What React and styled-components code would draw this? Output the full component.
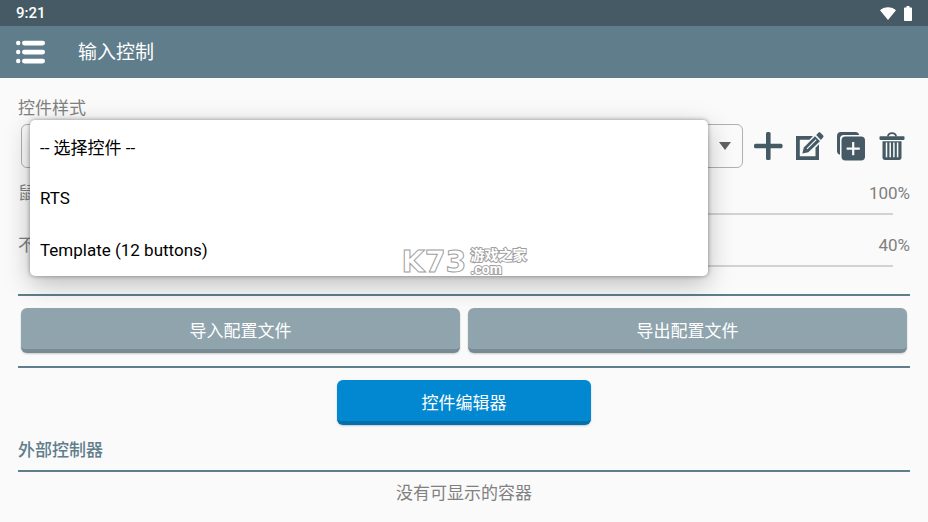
import React, { useState } from 'react';
import styled, { createGlobalStyle } from 'styled-components';

const profiles = ['-- 选择控件 --', 'RTS', 'Template (12 buttons)'];

const App = () => {
  const [profile, setProfile] = useState(profiles[0]);
  const [cursorSpeed, setCursorSpeed] = useState(100);
  const [opacity, setOpacity] = useState(40);

  return (
    <Page>
      <GlobalStyle />
      <StatusBar>
        <Clock>9:21</Clock>
        <StatusIcons>
          <WifiIcon />
          <BatteryIcon />
        </StatusIcons>
      </StatusBar>

      <Toolbar>
        <IconButton aria-label="菜单">
          <MenuIcon />
        </IconButton>
        <Title>输入控制</Title>
      </Toolbar>

      <Content>
        <FieldLabel htmlFor="profile">控件样式</FieldLabel>
        <ProfileRow>
          <SelectWrap>
            <Select id="profile" value={profile} onChange={(e) => setProfile(e.target.value)}>
              {profiles.map((name) => (
                <option key={name}>{name}</option>
              ))}
            </Select>
            <Arrow viewBox="0 0 12 10" aria-hidden="true">
              <path d="M0 1h12L6 9z" />
            </Arrow>
            <Popup>
              {profiles.map((name) => (
                <li key={name}>
                  <PopupItem onClick={() => setProfile(name)}>{name}</PopupItem>
                </li>
              ))}
            </Popup>
          </SelectWrap>
          <IconButton aria-label="添加"><AddIcon /></IconButton>
          <IconButton aria-label="编辑"><EditIcon /></IconButton>
          <IconButton aria-label="复制"><DuplicateIcon /></IconButton>
          <IconButton aria-label="删除"><TrashIcon /></IconButton>
        </ProfileRow>

        <Sliders>
          <div>
            <SliderHeader>
              <label htmlFor="speed">鼠标速度</label>
              <output htmlFor="speed">{cursorSpeed}%</output>
            </SliderHeader>
            <Range
              id="speed"
              min="0"
              max="200"
              value={cursorSpeed}
              onChange={(e) => setCursorSpeed(e.target.value)}
            />
          </div>
          <div>
            <SliderHeader>
              <label htmlFor="opacity">不透明度</label>
              <output htmlFor="opacity">{opacity}%</output>
            </SliderHeader>
            <Range
              id="opacity"
              min="0"
              max="100"
              value={opacity}
              onChange={(e) => setOpacity(e.target.value)}
            />
          </div>
        </Sliders>

        <Divider />
        <ButtonRow>
          <Button>导入配置文件</Button>
          <Button>导出配置文件</Button>
        </ButtonRow>
        <Divider />
        <EditorRow>
          <Button $primary>控件编辑器</Button>
        </EditorRow>

        <SectionTitle>外部控制器</SectionTitle>
        <Divider />
        <EmptyText>没有可显示的容器</EmptyText>
      </Content>

      <Watermark>
        <WatermarkLogo>K73</WatermarkLogo>
        <WatermarkName>
          <span>游戏之家</span>
          <span>.com</span>
        </WatermarkName>
      </Watermark>
    </Page>
  );
};

// Icons
const WifiIcon = () => (
  <svg width="16" height="13" viewBox="0 0 16 13" fill="#fff" aria-hidden="true">
    <path d="M8 13 0 3.2C2.200 1.300 5 .3 8 .3s5.800 1 8 2.900z" />
  </svg>
);

const BatteryIcon = () => (
  <svg width="8" height="15" viewBox="0 0 8 15" fill="#fff" aria-hidden="true">
    <path d="M2.500 0h3v1.500H7c.6 0 1 .4 1 1V14c0 .6-.4 1-1 1H1c-.6 0-1-.4-1-1V2.500c0-.6.4-1 1-1h1.500z" />
  </svg>
);

const MenuIcon = () => (
  <svg width="30" height="30" viewBox="0 0 30 30" fill="#fff" aria-hidden="true">
    <circle cx="2.200" cy="6" r="2.200" />
    <circle cx="2.200" cy="15" r="2.200" />
    <circle cx="2.200" cy="24" r="2.200" />
    <rect x="6" y="3.800" width="23" height="4.600" rx="2.300" />
    <rect x="6" y="12.800" width="23" height="4.600" rx="2.300" />
    <rect x="6" y="21.800" width="23" height="4.600" rx="2.300" />
  </svg>
);

const AddIcon = () => (
  <svg width="30" height="30" viewBox="0 0 30 30" fill="#455a64" aria-hidden="true">
    <rect x="12" y="1" width="4.600" height="28" rx="1.500" />
    <rect x="0" y="12.700" width="28.500" height="4.600" rx="1.500" />
  </svg>
);

const EditIcon = () => (
  <svg width="30" height="30" viewBox="0 0 30 30" fill="#455a64" aria-hidden="true">
    <path d="M1 5h17l-3.500 3.800H4.800v16.400h15.700v-8.400l3.500-3.500V29H1z" />
    <path d="M20 5.200 25 10.200 13.300 21.300 7.300 22.600 8.800 16.600z" />
    <path d="M21.200 4.100 23.600 1.600c.5-.5 1.100-.5 1.600 0l3 3c.5.5.5 1.100 0 1.600l-2.300 2.800z" />
    <path d="M12 17.800 21.200 8.600" stroke="#fafafa" strokeWidth="1.100" fill="none" />
  </svg>
);

const DuplicateIcon = () => (
  <svg width="30" height="30" viewBox="0 0 30 30" fill="#455a64" aria-hidden="true">
    <path d="M5 1h14.500c2 0 3.300 1.200 3.700 3H7.500C5.500 4 4 5.500 4 7.500v16.300c-1.900-.4-3-1.700-3-3.700V5c0-2.500 1.500-4 4-4z" />
    <rect x="5.500" y="5.500" width="23.500" height="24" rx="4" />
    <path d="M17.200 11v13.200M10.600 17.600h13.200" stroke="#fafafa" strokeWidth="2.200" />
  </svg>
);

const TrashIcon = () => (
  <svg width="30" height="30" viewBox="0 0 30 30" fill="#455a64" aria-hidden="true">
    <path d="M10.800 5.500c.4-2.100 1.800-3.300 4.200-3.300s3.800 1.200 4.200 3.300" stroke="#455a64" strokeWidth="1.700" fill="none" />
    <rect x="2.500" y="5.300" width="25" height="3.600" rx=".8" />
    <path d="M5.500 10.300h19V26.500c0 1.600-.9 2.500-2.500 2.500H8c-1.600 0-2.500-.9-2.500-2.500z" />
    <path d="M9.500 11.500v14.700M13.200 11.500v14.700M16.900 11.500v14.700M20.600 11.500v14.700" stroke="#fafafa" strokeWidth="1.500" />
  </svg>
);

// Styled Components
const GlobalStyle = createGlobalStyle`
  * {
    box-sizing: border-box;
  }

  body {
    margin: 0;
    background: #fafafa;
  }

  body, button, select {
    font-family: Roboto, "Noto Sans CJK SC", sans-serif;
    font-size: 17px;
  }
`;

const Page = styled.div`
  position: relative;
  min-height: 100vh;
  overflow: hidden;
  line-height: 26px;
  color: #808080;
`;

const StatusBar = styled.div`
  display: flex;
  align-items: center;
  justify-content: space-between;
  height: 26px;
  padding: 0 16px;
  background: #455a64;
  color: #fff;
`;

const Clock = styled.time`
  font-size: 15px;
  font-weight: 500;
`;

const StatusIcons = styled.div`
  display: flex;
  align-items: center;
  gap: 8px;
`;

const Toolbar = styled.header`
  display: flex;
  align-items: center;
  gap: 32px;
  height: 52px;
  padding: 0 16px;
  background: #607d8b;
  color: #fff;
`;

const Title = styled.h1`
  margin: 0;
  padding-top: 2px;
  font-size: 19px;
  font-weight: 400;
`;

const Content = styled.main`
  padding: 17px 18px;
`;

const FieldLabel = styled.label`
  display: block;
`;

const ProfileRow = styled.div`
  display: flex;
  align-items: center;
  gap: 11px;
  margin: 3px 3px 12px;
`;

const SelectWrap = styled.div`
  position: relative;
  flex: 1;
`;

const Select = styled.select`
  display: block;
  appearance: none;
  width: 100%;
  height: 44px;
  padding: 0 36px 0 18px;
  border: 1px solid #b0b0b0;
  border-radius: 6px;
  background: transparent;
  color: #000;
`;

const Arrow = styled.svg`
  position: absolute;
  top: 17px;
  right: 12px;
  width: 12px;
  height: 10px;
  fill: #616161;
  pointer-events: none;
`;

const Popup = styled.ul`
  position: absolute;
  z-index: 1;
  top: -4px;
  left: 9px;
  right: 35px;
  margin: 0;
  padding: 0;
  list-style: none;
  border-radius: 5px;
  background: #fff;
  box-shadow: 0 0 4px rgba(0, 0, 0, 0.4), 0 8px 26px rgba(0, 0, 0, 0.25);
`;

const PopupItem = styled.button`
  display: block;
  width: 100%;
  height: 52px;
  padding: 0 10px;
  border: none;
  background: none;
  color: #000;
  text-align: left;
`;

const IconButton = styled.button`
  display: flex;
  width: 30px;
  height: 30px;
  padding: 0;
  border: none;
  background: none;
`;

const Sliders = styled.div`
  display: grid;
  gap: 10px;
  margin-bottom: 20px;
`;

const SliderHeader = styled.div`
  display: flex;
  justify-content: space-between;
`;

const Range = styled.input.attrs({ type: 'range' })`
  display: block;
  appearance: none;
  width: calc(100% - 34px);
  height: 16px;
  margin: 0 17px;
  background: linear-gradient(#d2d2d2, #d2d2d2) center / 100% 2px no-repeat;

  &::-webkit-slider-thumb {
    appearance: none;
    width: 14px;
    height: 14px;
    border-radius: 50%;
    background: #0288d1;
  }
`;

const Divider = styled.hr`
  height: 2px;
  margin: 0;
  border: none;
  background: #607d8b;
`;

const ButtonRow = styled.div`
  display: grid;
  grid-template-columns: 1fr 1fr;
  gap: 8px;
  padding: 12px 3px 13px;
`;

const EditorRow = styled.div`
  display: flex;
  justify-content: center;
  padding: 12px 0;
`;

const Button = styled.button`
  height: 45px;
  min-width: 254px;
  padding: 2px 16px 0;
  border: none;
  border-bottom: 4px solid ${(props) => (props.$primary ? '#0270ae' : '#788a93')};
  border-radius: 6px;
  background: ${(props) => (props.$primary ? '#0288d1' : '#90a4ae')};
  box-shadow: 0 1px 2px rgba(0, 0, 0, 0.2);
  color: #fff;
`;

const SectionTitle = styled.h2`
  margin: 0 0 7px;
  color: #607d8b;
  font-size: 17px;
  font-weight: 500;
`;

const EmptyText = styled.p`
  margin: 8px 0 0;
  text-align: center;
`;

const Watermark = styled.div`
  position: absolute;
  z-index: 2;
  top: 50%;
  left: 50%;
  display: flex;
  align-items: center;
  gap: 4px;
  transform: translate(-50%, -50%);
  color: #fff;
  font-weight: 700;
  -webkit-text-stroke: 1px #a0a0a0;
  pointer-events: none;
`;

const WatermarkLogo = styled.span`
  font-family: "DejaVu Sans", sans-serif;
  font-size: 30px;
`;

const WatermarkName = styled.span`
  display: grid;
  font-size: 14px;
  line-height: 14px;
  -webkit-text-stroke: 2px #a0a0a0;
  paint-order: stroke fill;
`;

export default App;
